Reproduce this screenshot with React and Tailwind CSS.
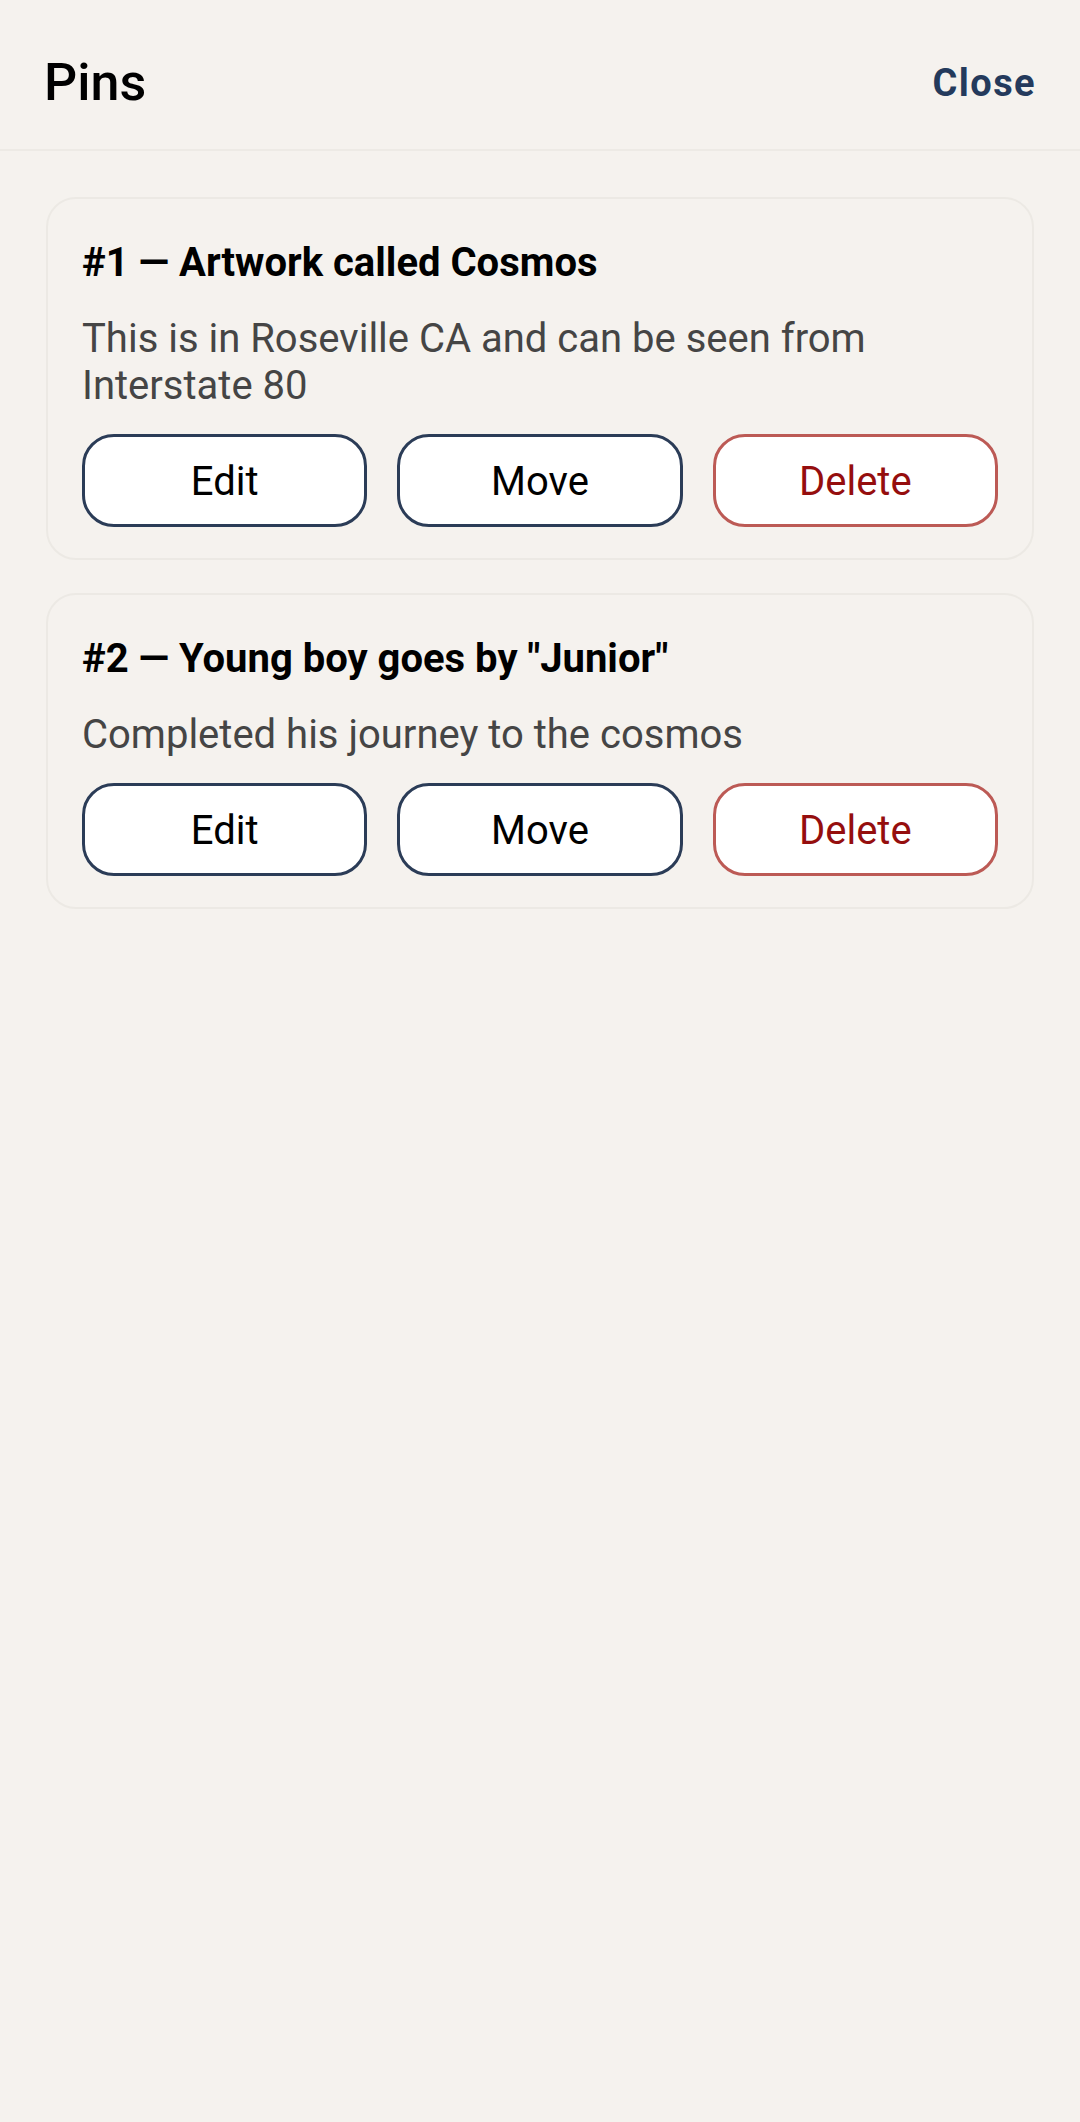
import React from "react";

const pins = [
  {
    id: 1,
    title: "Artwork called Cosmos",
    note: "This is in Roseville CA and can be seen from Interstate 80",
  },
  {
    id: 2,
    title: 'Young boy goes by "Junior"',
    note: "Completed his journey to the cosmos",
  },
];

function PinCard({ pin }) {
  return (
    <div className="rounded-[30px] border-2 border-[#ECE9E4] bg-[#F5F2EE] px-[34px] pt-[40px] pb-[31px]">
      <h2 className="text-[40px] leading-[47px] font-bold text-black">
        #{pin.id} — {pin.title}
      </h2>
      <p className="mt-[29px] text-[40px] leading-[47px] text-[#454545]">{pin.note}</p>

      {/* actions */}
      <div className="mt-[25px] grid grid-cols-3 gap-[30px]">
        <button className="h-[93px] rounded-[32px] border-[3px] border-[#2B3C57] bg-white pt-[2px] text-[40px] text-black">
          Edit
        </button>
        <button className="h-[93px] rounded-[32px] border-[3px] border-[#2B3C57] bg-white pt-[2px] text-[40px] text-black">
          Move
        </button>
        <button className="h-[93px] rounded-[32px] border-[3px] border-[#BC5A55] bg-white pt-[2px] text-[40px] text-[#950E0E]">
          Delete
        </button>
      </div>
    </div>
  );
}

export default function App() {
  return (
    <div className="min-h-screen bg-[#F5F2EE] font-['Roboto',sans-serif]">
      {/* HEADER */}
      <div className="flex h-[151px] items-center justify-between border-b-2 border-[#EDEAE5] px-[44px] pt-[16px]">
        <h1 className="text-[52px] leading-[61px] font-medium text-black">Pins</h1>
        <button className="text-[38px] leading-[44px] font-bold tracking-[1.4px] text-[#243A5C]">Close</button>
      </div>

      {/* LIST */}
      <div className="flex flex-col gap-[33px] px-[46px] pt-[46px]">
        {pins.map((p) => (
          <PinCard key={p.id} pin={p} />
        ))}
      </div>
    </div>
  );
}
